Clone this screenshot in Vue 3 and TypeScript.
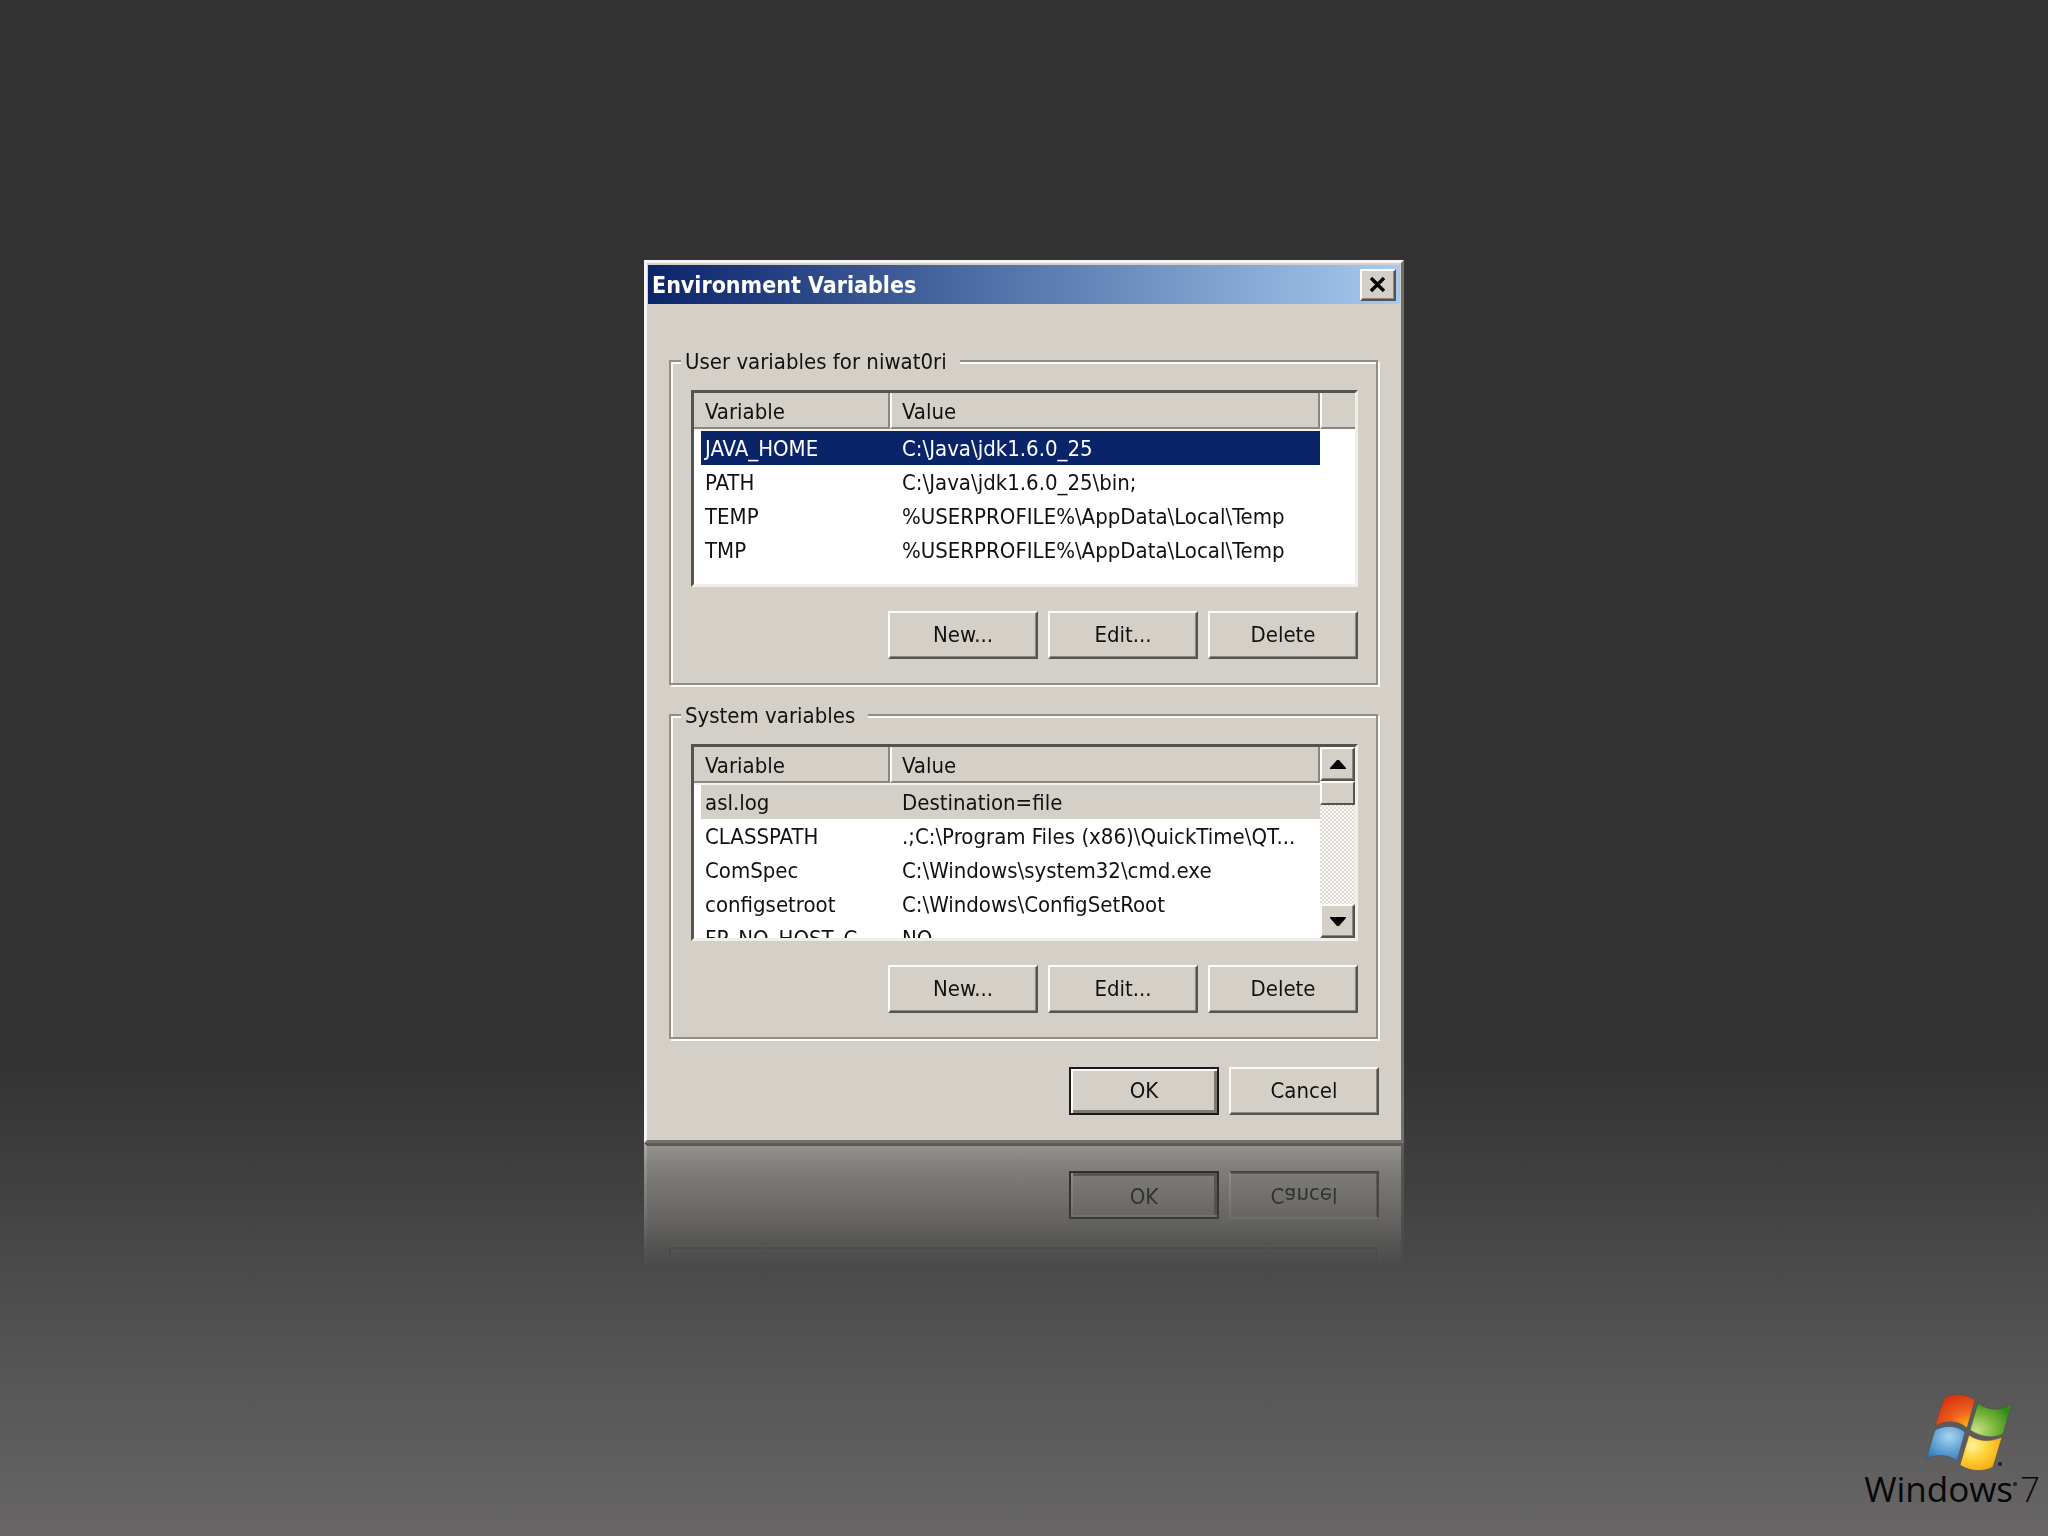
<script setup lang="ts">
interface Variable {
  name: string
  value: string
}

interface VariableGroup {
  id: string
  title: string
  scrollable: boolean
  rows: Variable[]
}

const groups: VariableGroup[] = [
  {
    id: 'user',
    title: 'User variables for niwat0ri',
    scrollable: false,
    rows: [
      { name: 'JAVA_HOME', value: 'C:\\Java\\jdk1.6.0_25' },
      { name: 'PATH', value: 'C:\\Java\\jdk1.6.0_25\\bin;' },
      { name: 'TEMP', value: '%USERPROFILE%\\AppData\\Local\\Temp' },
      { name: 'TMP', value: '%USERPROFILE%\\AppData\\Local\\Temp' },
    ],
  },
  {
    id: 'system',
    title: 'System variables',
    scrollable: true,
    rows: [
      { name: 'asl.log', value: 'Destination=file' },
      { name: 'CLASSPATH', value: '.;C:\\Program Files (x86)\\QuickTime\\QT...' },
      { name: 'ComSpec', value: 'C:\\Windows\\system32\\cmd.exe' },
      { name: 'configsetroot', value: 'C:\\Windows\\ConfigSetRoot' },
      { name: 'FP_NO_HOST_C...', value: 'NO' },
    ],
  },
]

const actions: string[] = ['New...', 'Edit...', 'Delete']
</script>

<template>
  <main class="desktop">
    <section class="dialog" role="dialog" aria-labelledby="dialog-title">
      <header class="titlebar">
        <h1 id="dialog-title">Environment Variables</h1>
        <button class="close" type="button" aria-label="Close">
          <svg viewBox="0 0 18 18" width="18" height="18" aria-hidden="true">
            <path d="M2 2 L15 15 M15 2 L2 15" stroke="#000" stroke-width="3.4" fill="none" />
          </svg>
        </button>
      </header>

      <div class="content">
        <fieldset v-for="group in groups" :key="group.id" class="group">
          <legend>{{ group.title }}</legend>
          <div class="list">
            <div class="viewport">
              <table>
                <colgroup>
                  <col class="col-name" />
                  <col />
                  <col v-if="!group.scrollable" class="col-rest" />
                </colgroup>
                <thead>
                  <tr>
                    <th scope="col">Variable</th>
                    <th scope="col">Value</th>
                    <td v-if="!group.scrollable" class="head-rest"></td>
                  </tr>
                </thead>
                <tbody :class="group.id">
                  <tr v-for="(row, index) in group.rows" :key="row.name" :class="{ selected: index === 0 }">
                    <td class="name">{{ row.name }}</td>
                    <td>{{ row.value }}</td>
                  </tr>
                </tbody>
              </table>
            </div>
            <div v-if="group.scrollable" class="scrollbar">
              <button class="arrow" type="button" aria-label="Scroll up">
                <svg viewBox="0 0 16 9" width="16" height="9" aria-hidden="true">
                  <path d="M0 9 L0 8 L7 0 L9 0 L16 8 L16 9 Z" />
                </svg>
              </button>
              <div class="thumb"></div>
              <button class="arrow down" type="button" aria-label="Scroll down">
                <svg viewBox="0 0 16 9" width="16" height="9" aria-hidden="true">
                  <path d="M0 0 L0 1 L7 9 L9 9 L16 1 L16 0 Z" />
                </svg>
              </button>
            </div>
          </div>
          <div class="buttons">
            <button v-for="action in actions" :key="action" class="push" type="button">{{ action }}</button>
          </div>
        </fieldset>

        <div class="buttons">
          <button class="push default" type="button">OK</button>
          <button class="push" type="button">Cancel</button>
        </div>
      </div>
    </section>

    <footer class="brand">
      <svg class="flag" viewBox="0 0 88 80" width="88" height="80" aria-hidden="true">
        <defs>
          <radialGradient id="red" cx="0.85" cy="0.95" r="1">
            <stop offset="0" stop-color="#fdb913" />
            <stop offset="0.45" stop-color="#f0641e" />
            <stop offset="1" stop-color="#d8330f" />
          </radialGradient>
          <radialGradient id="green" cx="0.15" cy="0.8" r="0.9">
            <stop offset="0" stop-color="#c5e08a" />
            <stop offset="0.5" stop-color="#7cb83c" />
            <stop offset="1" stop-color="#358a1c" />
          </radialGradient>
          <radialGradient id="blue" cx="0.6" cy="0.3" r="0.9">
            <stop offset="0" stop-color="#a9d3ee" />
            <stop offset="0.5" stop-color="#5b9fd2" />
            <stop offset="1" stop-color="#2568a8" />
          </radialGradient>
          <radialGradient id="yellow" cx="0.3" cy="0.3" r="0.9">
            <stop offset="0" stop-color="#fff09a" />
            <stop offset="0.45" stop-color="#fdcf2f" />
            <stop offset="1" stop-color="#f29a10" />
          </radialGradient>
        </defs>
        <g stroke="#4a4848" stroke-opacity="0.5" stroke-width="1" stroke-linejoin="round">
          <path d="M18 4 C27 -1 39 -1 49 6 L41 34 C32 26 20 26 9 32 Z" fill="url(#red)" />
          <path d="M52 9 C62 17 74 17 86 10 L77 40 C66 45 54 43 44 36 Z" fill="url(#green)" />
          <path d="M9 36 C19 31 30 31 39 38 L31 67 C22 60 10 60 0 65 Z" fill="url(#blue)" />
          <path d="M43 41 C53 48 65 48 76 43 L67 73 C56 79 43 77 34 71 Z" fill="url(#yellow)" />
        </g>
        <circle cx="74" cy="70" r="2" fill="#222" />
      </svg>
      <p class="wordmark">Windows<i class="dot"></i><span>7</span></p>
    </footer>
  </main>
</template>

<style>
html,
body {
  height: 100%;
  margin: 0;
}
</style>

<style scoped>
.desktop {
  --face: #d4d0c8;
  --shade: #8a8782;
  --dark: #55534f;
  --lit: #fbfaf7;
  box-sizing: border-box;
  min-height: 100vh;
  display: flex;
  flex-direction: column;
  align-items: center;
  padding-top: 260px;
  background: linear-gradient(#333 69%, #4f4e4e 85%, #686667 100%);
  color: #111;
  font: 22px/26px "DejaVu Sans Condensed", "Noto Sans", sans-serif;
}

.dialog {
  box-sizing: border-box;
  width: 100%;
  max-width: 760px;
  padding: 2px 0 0 1px;
  background: var(--face);
  border: 3px solid #f6f5f3;
  border-right-color: #72706c;
  border-bottom-color: #72706c;
  -webkit-box-reflect: below 0
    linear-gradient(
      to top,
      rgba(0, 0, 0, 0.6) 0,
      rgba(0, 0, 0, 0.44) 25px,
      rgba(0, 0, 0, 0.24) 75px,
      rgba(0, 0, 0, 0.09) 102px,
      transparent 126px
    );
}

.titlebar {
  display: flex;
  align-items: center;
  justify-content: space-between;
  height: 39px;
  margin-right: 1px;
  padding: 0 4px;
  background: linear-gradient(90deg, #0a246a, #a6caf0);
}

h1 {
  margin: 0;
  color: #fff;
  font-size: 23px;
  line-height: 26px;
}

button {
  box-sizing: border-box;
  margin: 0;
  padding: 0;
  display: flex;
  align-items: center;
  justify-content: center;
  border: 2px solid;
  border-color: var(--lit) var(--dark) var(--dark) var(--lit);
  border-radius: 0;
  background: var(--face);
  box-shadow: inset -1px -1px 0 var(--shade);
  color: inherit;
  font: inherit;
}

.close {
  width: 36px;
  height: 32px;
}

.content {
  padding: 42px 22px 25px 21px;
}

.group {
  min-width: 0;
  margin: 0 1px 15px 0;
  padding: 15px 18px 24px 20px;
  border: 2px solid #918e89;
  box-shadow: 2px 2px 0 var(--lit), inset 2px 2px 0 var(--lit);
}

.group + .buttons {
  margin-top: 28px;
}

legend {
  margin-left: -10px;
  padding: 3px 13px 0 4px;
  background: var(--face);
}

.list {
  display: flex;
  height: 191px;
  border: 3px solid;
  border-color: var(--dark) #f1efea #f1efea var(--dark);
  background: #fff;
}

.viewport {
  flex: 1;
  min-width: 0;
  overflow: hidden;
}

table {
  width: 100%;
  table-layout: fixed;
  border-collapse: separate;
  border-spacing: 0;
}

.col-name {
  width: 196px;
}

.col-rest {
  width: 35px;
}

th,
.head-rest {
  height: 30px;
  padding: 4px 0 0 10px;
  border-left: 2px solid var(--lit);
  border-bottom: 2px solid var(--shade);
  box-shadow: inset -2px 0 0 var(--shade), 0 2px 0 #f4f3f0;
  background: var(--face);
  font-weight: 400;
  text-align: left;
}

th:first-child {
  padding-left: 11px;
  border-left: 0;
}

.head-rest {
  box-shadow: none;
}

tbody::before {
  content: "";
  display: block;
  height: 2px;
}

tbody td {
  height: 32px;
  padding: 2px 0 0 12px;
  overflow: hidden;
  white-space: nowrap;
}

tbody td.name {
  padding-left: 4px;
  border-left: 7px solid #fff;
}

.selected td {
  background: var(--face);
}

.user .selected td {
  background: #0a246a;
  color: #fff;
}

.scrollbar {
  display: flex;
  flex-direction: column;
  width: 35px;
  background: repeating-conic-gradient(#dcd9d3 0 25%, #fbfaf8 0 50%) 0 0 / 4px 4px;
}

.arrow {
  width: 35px;
  height: 34px;
}

.thumb {
  box-sizing: border-box;
  height: 24px;
  border: 2px solid;
  border-color: var(--lit) var(--dark) var(--dark) var(--lit);
  background: var(--face);
}

.down {
  margin-top: auto;
}

.buttons {
  display: flex;
  justify-content: flex-end;
  gap: 10px;
}

.list + .buttons {
  margin-top: 24px;
}

.push {
  width: 150px;
  height: 48px;
}

.default {
  border-color: #1a1917;
  box-shadow: inset 2px 2px 0 var(--lit), inset -3px -3px 0 #7d7a75;
}

.brand {
  align-self: flex-end;
  margin-top: auto;
  padding: 0 8px 32px 0;
  color: #080808;
}

.flag {
  display: block;
  margin-left: 62px;
}

.wordmark {
  display: flex;
  margin: 0;
  font: 35px/30px "Open Sans", "Noto Sans", sans-serif;
}

.wordmark span {
  margin-left: 3px;
  font-weight: 300;
}

.dot {
  width: 4px;
  height: 4px;
  margin-top: 8px;
  border-radius: 50%;
  background: #222;
}
</style>
